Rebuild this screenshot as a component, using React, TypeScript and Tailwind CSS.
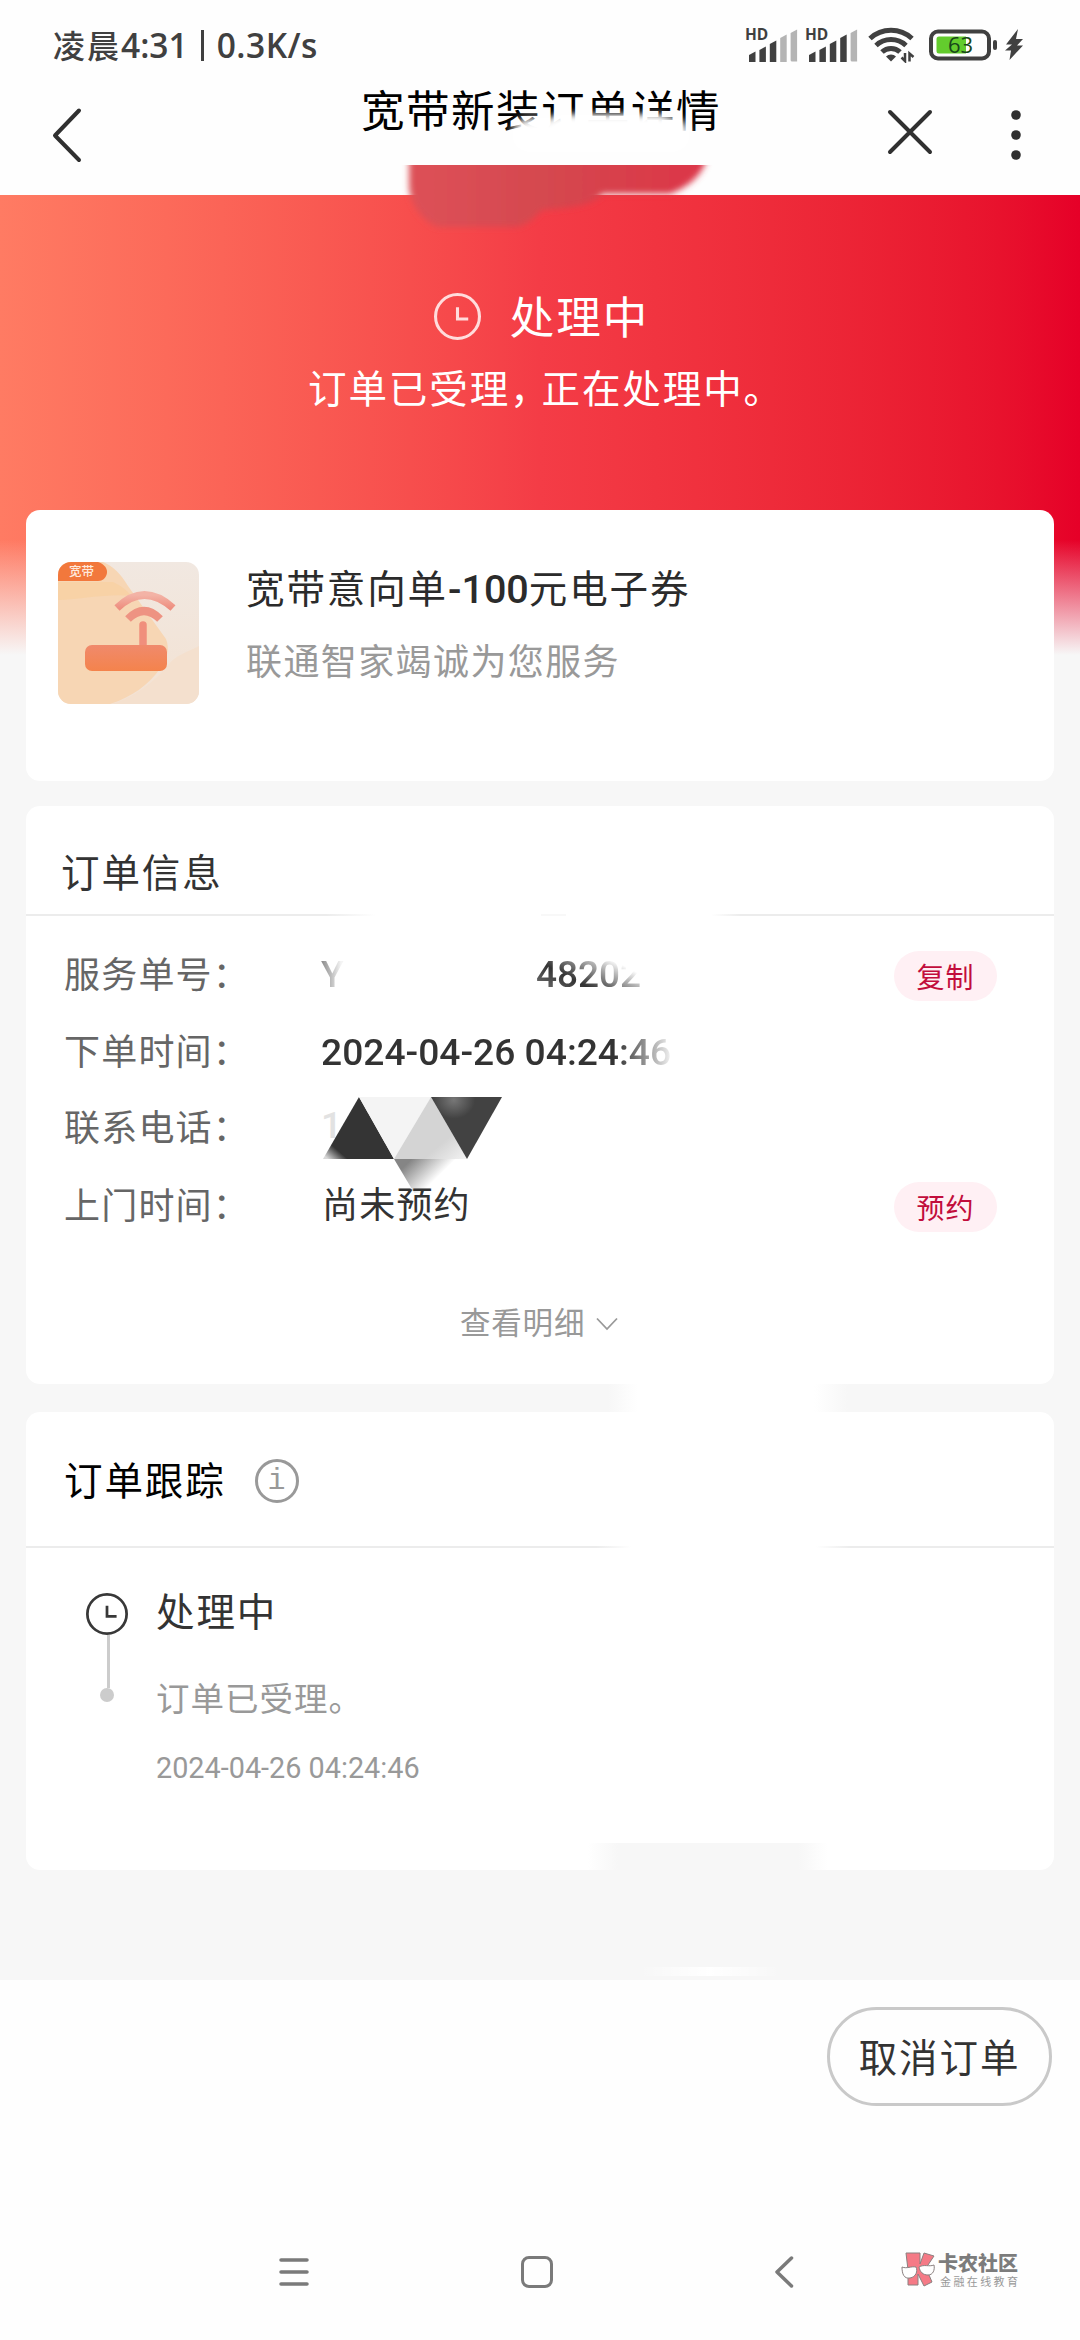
import type { ReactNode } from "react";

const ORDER_TIME = "2024-04-26 04:24:46";

function ClockIcon({ className, strokeWidth }: { className: string; strokeWidth: number }) {
  return (
    <svg viewBox="0 0 46 46" fill="none" stroke="currentColor" strokeWidth={strokeWidth} className={className}>
      <circle cx="23" cy="23" r="21.5" />
      <path d="M23 14v11.5h10.5" />
    </svg>
  );
}

function Signal({ level }: { level: number }) {
  const tops = [24, 19, 13, 7, 2];

  return (
    <div className="relative h-[34px] w-[52px] shrink-0">
      <span className="absolute -left-px -top-[5px] font-['Open_Sans',sans-serif] text-[15.5px] font-bold leading-[22px] text-[#404040]">HD</span>
      <svg width="52" height="34" viewBox="0 0 52 34">
        {tops.map((top, i) => (
          <path
            key={top}
            d={`M${3 + i * 10.4} ${top + 3}l6.5-3.5v32h-5a1.5 1.5 0 0 1-1.5-1.5z`}
            fill={i < level ? "#404040" : "#b4b4b4"}
          />
        ))}
      </svg>
    </div>
  );
}

function StatusBar() {
  return (
    <div className="flex h-[90px] items-center justify-between pl-[53px] pr-[57px]">
      <div className="flex items-center text-[#404040]">
        <span className="mb-[2px] text-[32px] font-medium leading-[44px] tracking-[2px]">凌晨</span>
        <span className="font-['Open_Sans',sans-serif] text-[33.5px] font-semibold leading-[44px]">4:31</span>
        <span className="mx-[13px] h-[31px] w-[3px] bg-[#404040]" />
        <span className="font-['Open_Sans',sans-serif] text-[33.5px] font-semibold leading-[44px] tracking-[0.5px]">0.3K/s</span>
      </div>
      <div className="flex items-center">
        <Signal level={3} />
        <div className="w-2" />
        <Signal level={4} />
        <svg width="47" height="36" viewBox="0 0 47 36" fill="none" stroke="#404040" strokeWidth="5" className="ml-[10px]">
          <path d="M2 11.5a31 31 0 0 1 42 0" />
          <path d="M8 18.5a22 22 0 0 1 30 0" />
          <path d="M14 25a13 13 0 0 1 18 0" />
          <path d="M18 29.5a7 7 0 0 1 10 0l-5 5z" fill="#404040" stroke="none" />
          <path d="M37 26v8l-3.5-3.5M41.5 34.5v-8l4 3.5" strokeWidth="2.5" />
        </svg>
        <svg width="68" height="32" viewBox="0 0 68 32" className="ml-[14px]">
          <rect x="2" y="2.5" width="58" height="27" rx="7" fill="none" stroke="#404040" strokeWidth="4" />
          <rect x="64" y="11" width="4" height="10" rx="2" fill="#404040" />
          <path d="M10 7.5h27v17h-27a2.5 2.5 0 0 1-2.5-2.5v-12a2.5 2.5 0 0 1 2.5-2.5z" fill="#63cc2d" />
          <text x="31.5" y="24" fontSize="22" fontWeight="500" textAnchor="middle" fill="#17461a" className="font-['Open_Sans',sans-serif]">63</text>
        </svg>
        <svg width="18" height="32" viewBox="0 0 18 32" className="ml-2">
          <path d="M13 0 1 15.5h6L0 21.5h6L4.5 31 18 16.5h-6L18 10h-7z" fill="#404040" />
        </svg>
      </div>
    </div>
  );
}

function TitleBar() {
  return (
    <div className="relative flex h-[105px] items-start">
      <svg width="32" height="56" viewBox="0 0 32 56" fill="none" stroke="#303030" strokeWidth="4" strokeLinecap="round" strokeLinejoin="round" className="ml-[52px] mt-[17px]">
        <path d="M27 3.5 3 28.5 27 53" />
      </svg>
      <h1 className="ml-[277px] -mt-[11px] w-[365px] whitespace-nowrap text-[43.5px] leading-[60px] tracking-[1.5px] text-black">
        宽带新装订单详情
      </h1>
      <svg width="48" height="48" viewBox="0 0 48 48" fill="none" stroke="#303030" strokeWidth="4" strokeLinecap="round" className="ml-[160px] mt-[18px]">
        <path d="M4 4l40 40M44 4 4 44" />
      </svg>
      <svg width="12" height="52" viewBox="0 0 12 52" fill="#303030" className="ml-[76px] mt-[19px]">
        <circle cx="6" cy="6" r="4.8" />
        <circle cx="6" cy="26" r="4.8" />
        <circle cx="6" cy="46" r="4.8" />
      </svg>

      {/* brush marks over the title */}
      <div className="absolute left-[512px] top-[28px] h-[34px] w-[178px] rounded-full bg-white blur-[4px]" />
      <div className="absolute left-[550px] top-[25px] h-[24px] w-[120px] rounded-full bg-white blur-[4px]" />
    </div>
  );
}

function RedSmudge() {
  return (
    <svg width="320" height="70" viewBox="0 0 320 70" className="absolute left-[400px] top-[165px] z-10">
      <defs>
        <linearGradient id="smudge" x1="0" x2="1">
          <stop offset="0" stopColor="#dd5157" />
          <stop offset=".45" stopColor="#d5484f" />
          <stop offset="1" stopColor="#dc3547" />
        </linearGradient>
        <filter id="soft" x="-10%" y="-40%" width="120%" height="180%">
          <feGaussianBlur stdDeviation="3" />
        </filter>
        <clipPath id="top">
          <rect width="320" height="70" />
        </clipPath>
      </defs>
      <g clipPath="url(#top)">
        <path d="M9-12h299c-2 16-14 32-38 41h-68c-4 8-22 14-60 16-8 8-16 16-26 17H38C22 56 9 38 9 20z" fill="url(#smudge)" filter="url(#soft)" />
      </g>
    </svg>
  );
}

function RouterPicture() {
  return (
    <svg width="141" height="142" viewBox="0 0 141 142" className="shrink-0">
      <defs>
        <clipPath id="frame">
          <rect width="141" height="142" rx="13" />
        </clipPath>
        <linearGradient id="body" x1="0" y1="0" x2="0" y2="1">
          <stop offset="0" stopColor="#f08a6c" />
          <stop offset="1" stopColor="#f4834c" />
        </linearGradient>
        <linearGradient id="wave" x1="0" y1="0" x2="0" y2="1">
          <stop offset="0" stopColor="#f3b3a6" />
          <stop offset="1" stopColor="#ee8f80" />
        </linearGradient>
        <linearGradient id="paper" x1="0" y1="0" x2="0" y2="1">
          <stop offset="0" stopColor="#f1e8e1" />
          <stop offset="1" stopColor="#f3e2d3" />
        </linearGradient>
      </defs>
      <g clipPath="url(#frame)">
        <rect width="141" height="142" fill="url(#paper)" />
        <path d="M0 0h45c10 4 18 12 25 24l38 53c4 10 1 20-6 30-12 16-28 28-50 35H0z" fill="#f7d6b4" />
        <path d="M0 20h55c8 4 14 8 18 14-20-3-48 3-73 4z" fill="#f8cf9c" opacity=".6" />
        <path d="M141 84c-12 6-24 10-30 18-16 20-36 34-58 40h88z" fill="#f4e0ce" />
        <path d="M0 0h40c6 2 9 6 9 10s-3 9-9 9H0z" fill="#f2783c" />
        <text x="11" y="14" fontSize="12.5" fontWeight="500" fill="#ffe9dc" className="font-['Noto_Sans_CJK_SC',sans-serif]">宽带</text>
        <path d="M59 46q27-26 56 0" fill="none" stroke="url(#wave)" strokeWidth="7.5" />
        <path d="M70 57q16-16 32 0" fill="none" stroke="#ee9382" strokeWidth="8" />
        <path d="M85 88V63" stroke="#f08f7c" strokeWidth="7.5" strokeLinecap="round" />
        <rect x="27" y="83" width="82" height="26" rx="7" fill="url(#body)" />
      </g>
    </svg>
  );
}

function Row({ label, className, children }: { label: string; className: string; children: ReactNode }) {
  return (
    <div className={`flex items-center ${className}`}>
      <span className="mb-[2px] w-[257px] shrink-0 text-[36px] tracking-[1.2px] text-[#666]">{label}：</span>
      {children}
    </div>
  );
}

function Pill({ children }: { children: ReactNode }) {
  return (
    <button className="ml-auto mr-[57px] mt-[6px] flex h-[50px] w-[103px] items-center justify-center rounded-full bg-[#fff0f4] text-[28px] tracking-[1px] text-[#c20d3c]">
      {children}
    </button>
  );
}

function PhoneMosaic() {
  return (
    <svg width="186" height="96" viewBox="0 0 186 96" className="absolute left-[1px] top-[9px]">
      <defs>
        <linearGradient id="tail" x1="0" y1="0" x2=".7" y2=".6">
          <stop offset=".2" stopColor="#858585" />
          <stop offset=".7" stopColor="#858585" stopOpacity="0" />
        </linearGradient>
        <linearGradient id="grey" x1="0" y1="0" x2="1" y2="1">
          <stop offset=".7" stopColor="#d4d4d4" />
          <stop offset="1" stopColor="#f3f3f3" />
        </linearGradient>
        <linearGradient id="dark" x1="0" y1="1" x2=".35" y2=".65">
          <stop offset=".1" stopColor="#d8d8d8" />
          <stop offset=".5" stopColor="#343434" />
        </linearGradient>
        <radialGradient id="dark2" cx=".32" cy=".05" r=".3">
          <stop offset="0" stopColor="#777" />
          <stop offset="1" stopColor="#424242" />
        </radialGradient>
      </defs>
      <path d="M37 0 72 62H1z" fill="url(#dark)" />
      <path d="M37 0h72L72 62z" fill="#f4f4f4" />
      <path d="M109 0 72 62h73z" fill="url(#grey)" />
      <path d="M109 0h71l-35 62z" fill="url(#dark2)" />
      <path d="M72 62h73l-36 62z" fill="url(#tail)" />
    </svg>
  );
}

function OrderInfo() {
  return (
    <section className="relative mt-[25px] h-[578px] rounded-[14px] bg-white">
      <h2 className="flex h-[108px] items-end pb-[16px] pl-[35px] text-[38.5px] leading-[56px] tracking-[1.9px] text-[#333]">订单信息</h2>
      <div className="flex h-[2px]">
        <div className="w-[300px] bg-[#ececec]" />
        <div className="w-[50px] bg-linear-to-r from-[#ececec] to-white" />
        <div className="ml-[165px] w-[25px] bg-[#f8f8f8]" />
        <div className="ml-[145px] w-[30px] bg-linear-to-r from-white to-[#ececec]" />
        <div className="flex-1 bg-[#ececec]" />
      </div>

      <div className="pl-[38px] pt-[18px]">
        <Row label="服务单号" className="h-[78px]">
          <span className="mt-[3px] w-[215px] font-['Roboto',sans-serif] text-[37px] font-medium">
            <span className="bg-linear-to-r from-[#8a8a8a] to-[#f4f4f4] to-[20px] bg-clip-text text-transparent">Y</span>
          </span>
          <span className="mt-[3px] bg-linear-to-tr from-[#999] via-[#333] via-38% to-white to-75% bg-clip-text font-['Roboto',sans-serif] text-[37px] font-medium text-transparent">
            48202
          </span>
          <Pill>复制</Pill>
        </Row>
        <Row label="下单时间" className="h-[76px]">
          <span className="mt-[5px] bg-linear-to-r from-[#333] from-84% to-[#f2f2f2] bg-clip-text font-['Roboto',sans-serif] text-[37.2px] font-medium text-transparent">
            {ORDER_TIME}
          </span>
        </Row>
        <Row label="联系电话" className="h-[76px]">
          <span className="relative h-full w-[186px] font-['Roboto',sans-serif] text-[37px] font-medium leading-[75px] text-[#e2e2e2]">
            1
            <PhoneMosaic />
          </span>
        </Row>
        <Row label="上门时间" className="h-[79px]">
          <span className="z-10 mb-[3px] ml-px text-[36px] tracking-[1.2px] text-[#333]">尚未预约</span>
          <Pill>预约</Pill>
        </Row>
      </div>

      <button className="mt-[52px] flex h-[54px] w-full items-center pl-[434px] text-[30.5px] tracking-[0.8px] text-[#999]">
        查看明细
        <svg width="22" height="14" viewBox="0 0 22 14" fill="none" stroke="#999" strokeWidth="1.8" className="ml-[11px] mt-1">
          <path d="M1 1.5 11 12 21 1.5" />
        </svg>
      </button>
    </section>
  );
}

function OrderTracking() {
  return (
    <section className="relative mt-[28px] h-[458px] rounded-[14px] bg-white">
      {/* wiped gap between the two cards */}
      <div className="absolute -top-[28px] left-[582px] flex h-[28px] w-[240px]">
        <div className="w-[30px] bg-linear-to-r from-[#f7f7f7] to-white" />
        <div className="flex-1 bg-white" />
        <div className="w-[34px] bg-linear-to-r from-white to-[#f7f7f7]" />
      </div>

      <div className="flex h-[134px] items-center pl-[38px]">
        <h2 className="text-[38.5px] tracking-[1.9px] text-black">订单跟踪</h2>
        <span className="ml-[29px] mt-[3px] flex size-[44px] items-center justify-center rounded-full border-[3px] border-[#999] font-['Liberation_Mono',monospace] text-[30px] leading-none text-[#999]">
          i
        </span>
      </div>
      <div className="flex h-[2px]">
        <div className="w-[570px] bg-[#ececec]" />
        <div className="w-[35px] bg-linear-to-r from-[#ececec] to-white" />
        <div className="ml-[185px] w-[35px] bg-linear-to-r from-white to-[#ececec]" />
        <div className="flex-1 bg-[#ececec]" />
      </div>

      <div className="flex pl-[60px] pt-[31px]">
        <div className="flex w-[42px] flex-col items-center pt-[14px]">
          <ClockIcon className="size-[42px] text-[#383838]" strokeWidth={3} />
          <div className="h-[53px] w-[3px] translate-x-[1px] bg-[#ccc]" />
          <div className="size-[14px] rounded-full bg-[#ccc]" />
        </div>
        <div className="ml-[28px] flex flex-col">
          <span className="h-[60px] text-[38.5px] leading-[60px] tracking-[1.9px] text-[#333]">处理中</span>
          <span className="mt-[32px] h-[52px] text-[33.5px] leading-[52px] tracking-[1px] text-[#999]">订单已受理。</span>
          <span className="mt-[25px] h-[40px] font-['Roboto',sans-serif] text-[28.8px] leading-[40px] text-[#999]">{ORDER_TIME}</span>
        </div>
      </div>

      <div className="absolute bottom-0 left-[562px] flex h-[27px] w-[240px]">
        <div className="w-[30px] bg-linear-to-r from-white to-[#f7f7f7]" />
        <div className="flex-1 bg-[#f7f7f7]" />
        <div className="w-[30px] bg-linear-to-r from-[#f7f7f7] to-white" />
      </div>
    </section>
  );
}

function CommunityMark() {
  return (
    <div className="flex items-start">
      <svg width="35" height="36" viewBox="0 0 35 36" stroke="#8a8080" strokeWidth="1" strokeLinejoin="round">
        <path d="M5 1h14v11l4-11 10 3-8 12 6 14-8 4-6-12v11H7V18z" fill="#f57a86" />
        <path d="M1 15c5 2 9-1 14 0 2 4 0 10-6 11S1 22 1 15z" fill="#fff" />
        <path d="M18 15c5-3 10 0 15-2 1 5-1 10-6 10s-8-3-9-8z" fill="#fff" />
      </svg>
      <div className="ml-[2px] flex flex-col">
        <span className="text-[20px] font-black leading-[22px] text-[#7c7c7c]">卡农社区</span>
        <span className="ml-[2px] text-[11px] leading-[15px] tracking-[2.4px] text-[#999]">金融在线教育</span>
      </div>
    </div>
  );
}

function SystemNav() {
  return (
    <div className="mt-auto flex h-[92px] items-start pt-[4px]">
      <svg width="30" height="30" viewBox="0 0 30 30" stroke="#7a7a7a" strokeWidth="3.5" strokeLinecap="round" className="ml-[279px] mt-[5px]">
        <path d="M2 3h26M2 15h26M2 27h26" />
      </svg>
      <div className="ml-[212px] mt-[4px] h-[32px] w-[32px] rounded-[8px] border-[3.5px] border-[#7a7a7a]" />
      <svg width="20" height="34" viewBox="0 0 20 34" fill="none" stroke="#7a7a7a" strokeWidth="3.5" strokeLinecap="round" strokeLinejoin="round" className="ml-[221px] mt-[3px]">
        <path d="M17.5 3 3 17l14.5 14" />
      </svg>
      <div className="ml-[107px]">
        <CommunityMark />
      </div>
    </div>
  );
}

export default function App() {
  return (
    <div className="relative flex h-[2340px] w-[1080px] flex-col overflow-hidden bg-[#fefefe] font-['Noto_Sans_CJK_SC',sans-serif]">
      <header>
        <StatusBar />
        <TitleBar />
      </header>
      <RedSmudge />

      <main className="relative h-[1785px] bg-[#f7f7f7] px-[26px]">
        <div className="absolute inset-x-0 top-0 h-[460px] bg-linear-to-r from-[#ff7b63] via-[#f43c46] to-[#e60028]">
          <div className="absolute inset-x-0 bottom-0 h-[115px] bg-linear-to-b from-transparent to-[#f7f7f7]" />
        </div>

        <div className="relative flex h-[315px] flex-col items-center text-white">
          <div className="ml-[3px] mt-[88px] flex h-[66px] items-center">
            <ClockIcon className="size-[47px] text-[#ffdcdc]" strokeWidth={3} />
            <span className="mb-[2px] ml-[29px] text-[44.5px] leading-[66px] tracking-[2px]">处理中</span>
          </div>
          <p className="ml-[12px] mt-[9px] text-[38.5px] leading-[56px] tracking-[1.9px]">
            订单已受理<span className="tracking-[-7px]">，</span>正在处理中。
          </p>
        </div>

        <section className="relative flex h-[271px] rounded-[14px] bg-white pl-[32px] pt-[52px]">
          <RouterPicture />
          <div className="-mt-[4px] ml-[47px]">
            <h2 className="text-[38.5px] leading-[56px] tracking-[1.9px] text-[#2b2b2b]">
              宽带意向单<span className="font-['Roboto',sans-serif] text-[39.5px] font-medium tracking-normal">-100</span>元电子券
            </h2>
            <p className="mt-[13px] text-[36px] leading-[56px] tracking-[1.4px] text-[#999]">联通智家竭诚为您服务</p>
          </div>
        </section>

        <OrderInfo />
        <OrderTracking />

        <div className="absolute bottom-[4px] left-[640px] h-[9px] w-[140px] bg-linear-to-r from-transparent via-white to-transparent" />
      </main>

      <div className="flex justify-end pr-[28px] pt-[27px]">
        <button className="h-[99px] w-[225px] rounded-full border-3 border-[#c9c9c9] pb-[2px] text-[38.5px] tracking-[1.9px] text-[#333]">
          取消订单
        </button>
      </div>
      <SystemNav />
    </div>
  );
}
